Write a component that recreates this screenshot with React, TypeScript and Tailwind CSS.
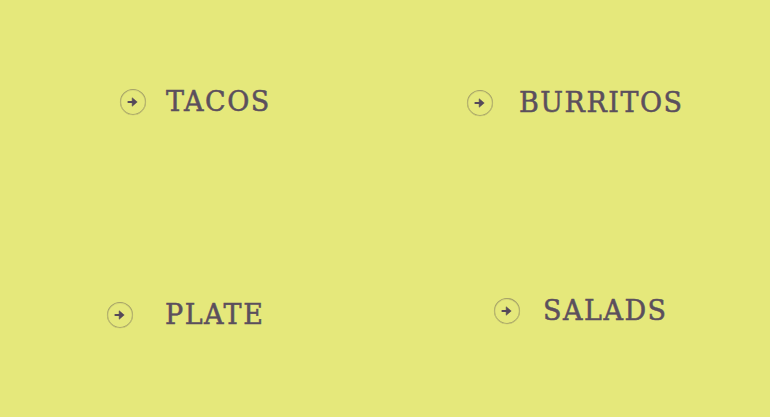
import React from 'react';

interface MenuItemProps {
  label: string;
  className: string;
}

function ArrowCircle() {
  return (
    <svg width="28" height="28" viewBox="0 0 28 28" className="shrink-0">
      <circle cx="14" cy="14" r="12.5" fill="none" stroke="#a39f68" strokeWidth="1.2" />
      <circle cx="14" cy="14.7" r="12.4" fill="none" stroke="#cfd074" strokeWidth="0.9" opacity="0.7" />
      <path d="M9.4 14h5.4" stroke="#55495a" strokeWidth="2" strokeLinecap="round" />
      <path d="M13.2 9.8l5 4.2-5 4.2z" fill="#55495a" stroke="#55495a" strokeWidth="0.6" strokeLinejoin="round" />
    </svg>
  );
}

function MenuItem({ label, className }: MenuItemProps) {
  return (
    <div className={`flex items-center ${className}`}>
      <ArrowCircle />
      <span className="text-[27px] leading-[28px] tracking-[1.5px] text-[#5b4f5d] [-webkit-text-stroke:0.5px_#5b4f5d] font-['DejaVu_Serif',serif]">
        {label}
      </span>
    </div>
  );
}

export default function App() {
  return (
    <div className="w-[770px] h-[417px] bg-[#e5e87b] grid grid-cols-2 grid-rows-[208px_209px] overflow-hidden">
      <div className="pl-[119px] pt-[88px]">
        <MenuItem label="TACOS" className="gap-[19px]" />
      </div>
      <div className="pl-[81px] pt-[89px]">
        <MenuItem label="BURRITOS" className="gap-[25px]" />
      </div>
      <div className="pl-[106px] pt-[93px]">
        <MenuItem label="PLATE" className="gap-[31px]" />
      </div>
      <div className="pl-[108px] pt-[89px]">
        <MenuItem label="SALADS" className="gap-[22px]" />
      </div>
    </div>
  );
}
